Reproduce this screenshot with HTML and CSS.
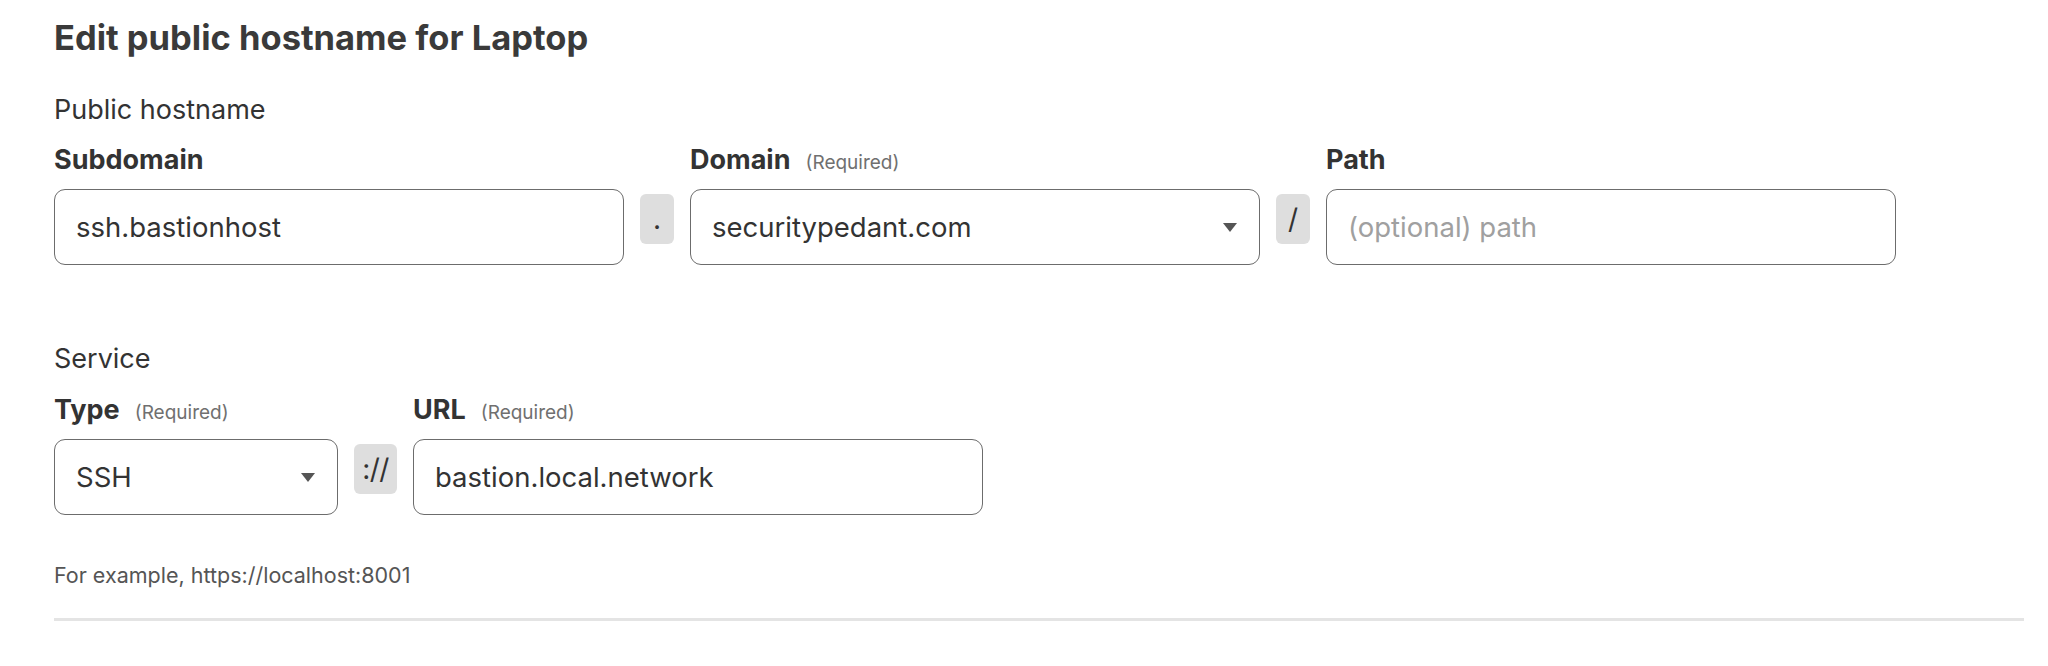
FILE: index.html
```html
<!DOCTYPE html>
<html lang="en">
<head>
<meta charset="utf-8">
<title>Edit public hostname for Laptop</title>
<link rel="stylesheet" href="styles.css">
</head>
<body>
<main class="page">
  <h1 class="title">Edit public hostname for Laptop</h1>

  <section class="group group-hostname">
    <h2 class="group-title">Public hostname</h2>
    <div class="row">
      <div class="field field-wide">
        <div class="label"><span class="label-name">Subdomain</span></div>
        <div class="input"><span class="value">ssh.bastionhost</span></div>
      </div>
      <div class="sep sep-narrow">.</div>
      <div class="field field-wide">
        <div class="label"><span class="label-name">Domain</span><span class="label-note">(Required)</span></div>
        <div class="input select"><span class="value">securitypedant.com</span><span class="caret"></span></div>
      </div>
      <div class="sep sep-narrow">/</div>
      <div class="field field-wide">
        <div class="label"><span class="label-name">Path</span></div>
        <div class="input"><span class="placeholder">(optional) path</span></div>
      </div>
    </div>
  </section>

  <section class="group group-service">
    <h2 class="group-title">Service</h2>
    <div class="row">
      <div class="field field-type">
        <div class="label"><span class="label-name">Type</span><span class="label-note">(Required)</span></div>
        <div class="input select"><span class="value">SSH</span><span class="caret"></span></div>
      </div>
      <div class="sep sep-scheme">://</div>
      <div class="field field-wide">
        <div class="label"><span class="label-name">URL</span><span class="label-note">(Required)</span></div>
        <div class="input"><span class="value">bastion.local.network</span></div>
      </div>
    </div>
    <p class="hint">For example, https://localhost:8001</p>
  </section>

  <hr class="divider">
</main>
</body>
</html>
```

FILE: styles.css
```css
* { box-sizing: border-box; }

html, body {
  margin: 0;
  padding: 0;
  background: #ffffff;
}

body {
  font-family: Inter, "Noto Sans", "Liberation Sans", sans-serif;
  color: #333333;
}

.page {
  padding: 0 24px 0 54px;
}

.title {
  margin: 0;
  padding-top: 18px;
  font-size: 34.5px;
  line-height: 40px;
  font-weight: 700;
  color: #3a3a3a;
  letter-spacing: 0;
}

.group-title {
  margin: 0;
  font-size: 27px;
  line-height: 32px;
  font-weight: 400;
  color: #333333;
}

.group-hostname { margin-top: 36px; }
.group-hostname .group-title { margin-bottom: 18px; }

.group-service { margin-top: 78px; }
.group-service .group-title { margin-bottom: 19px; }

.row {
  display: flex;
  align-items: flex-end;
  column-gap: 16px;
}

.field {
  display: flex;
  flex-direction: column;
}

.field-wide { width: 570px; }
.field-type { width: 284px; }

.label {
  display: flex;
  align-items: baseline;
  height: 32px;
  margin-bottom: 13px;
}

.label-name {
  font-size: 27px;
  line-height: 32px;
  font-weight: 700;
  color: #333333;
}

.label-note {
  margin-left: 15px;
  font-size: 19px;
  line-height: 24px;
  font-weight: 400;
  color: #707070;
}

.input {
  display: flex;
  align-items: center;
  height: 76px;
  padding: 0 21px;
  border: 1.5px solid #6c6c6c;
  border-radius: 11px;
  font-size: 27.5px;
  color: #333333;
}

.value { flex: 1; }

.placeholder {
  flex: 1;
  color: #a0a0a0;
}

.select { padding-right: 22px; }

.caret {
  width: 0;
  height: 0;
  border-left: 7px solid transparent;
  border-right: 7px solid transparent;
  border-top: 9px solid #555555;
}

.sep {
  display: flex;
  align-items: center;
  justify-content: center;
  height: 50px;
  margin-bottom: 21px;
  background: #dedede;
  border-radius: 6px;
  font-size: 28px;
  color: #333333;
}

.sep-narrow { width: 34px; }
.sep-scheme { width: 43px; letter-spacing: -0.5px; }

.hint {
  margin: 46px 0 0;
  font-size: 21.5px;
  line-height: 28px;
  color: #555555;
}

.divider {
  margin: 29px 0 0;
  border: 0;
  height: 3px;
  background: #e4e4e4;
}
```
